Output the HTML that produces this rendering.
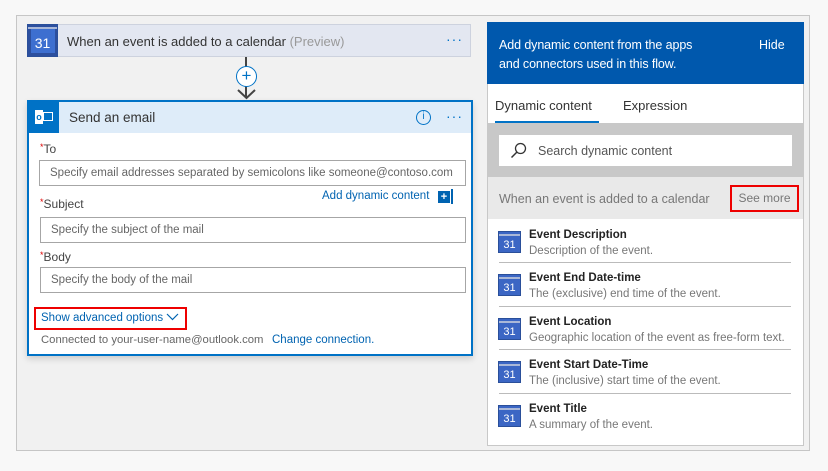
<!DOCTYPE html>
<html><head><style>
*{margin:0;padding:0;box-sizing:border-box}
body{width:828px;height:471px;background:#f8f8f8;font-family:"Liberation Sans",sans-serif;position:relative;overflow:hidden;font-size:12px;color:#333}
.a{position:absolute;white-space:nowrap}
.frame{left:16px;top:15px;width:794px;height:436px;border:1px solid #c6c6c6;background:#f1f1f1}
.cal{background:#3b66c4;border:1px solid #2a4f9a}
.cal:before{content:"";position:absolute;left:0;right:0;top:2px;height:2px;background:#aab8d8}
.cal span{position:absolute;left:0;right:0;bottom:0;text-align:center;color:#fff;font-size:12px}
.inp{border:1px solid #a6a6a6;background:#fff;height:26px;color:#666;font-size:11.5px;padding-left:10px;line-height:24px;overflow:hidden}
.lbl{font-size:12px;color:#444}
.lbl b{color:#d00;font-weight:normal;font-size:9px;vertical-align:top}
.item{left:498px;width:294px;height:43px}
.item .t{position:absolute;left:31px;top:10px;font-weight:bold;font-size:11.5px;color:#222}
.item .d{position:absolute;left:31px;top:26px;font-size:11.5px;color:#777}
.item .cal{position:absolute;left:0;top:12px;width:23px;height:22px}
.item .cal span{font-size:11px;bottom:1px}
</style></head><body>
<div class="a frame"></div>
<div class="a" style="left:27px;top:24px;width:444px;height:33px;background:#e3e7f1;border:1px solid #cdd2de"></div>
<div class="a cal" style="left:27px;top:24px;width:31px;height:33px;background:#2c4f9e"><div class="a" style="left:3px;top:4px;width:24px;height:24px;background:#3d6fd0"></div><span style="bottom:5px;font-size:14px">31</span></div>
<div class="a" style="left:67px;top:34px;font-size:13px;color:#333">When an event is added to a calendar <span style="color:#999">(Preview)</span></div>
<div class="a" style="left:446px;top:31px;color:#0072c6;font-size:14px;letter-spacing:1px">···</div>
<div class="a" style="left:245px;top:57px;width:2px;height:40px;background:#444"></div>
<div class="a" style="left:236px;top:66px;width:21px;height:21px;border-radius:50%;background:#fff;border:1px solid #0072c6;color:#0072c6;text-align:center;line-height:18px;font-size:17px">+</div>
<svg class="a" style="left:236px;top:88px" width="21" height="12"><path d="M2 2 L10.5 10 L19 2" stroke="#444" stroke-width="2" fill="none"/></svg>
<div class="a" style="left:27px;top:100px;width:446px;height:256px;background:#fff;border:2px solid #0072c6;box-shadow:0 3px 6px rgba(0,0,0,.15)"></div>
<div class="a" style="left:29px;top:102px;width:442px;height:31px;background:#deecf9"></div>
<div class="a" style="left:29px;top:102px;width:30px;height:31px;background:#0072c6"><div class="a" style="left:6px;top:8px;width:8px;height:14px;background:#fff;color:#0072c6;font-size:9px;font-weight:bold;text-align:center;line-height:14px">o</div><div class="a" style="left:14px;top:10px;width:10px;height:9px;border:1px solid #fff"></div></div>
<div class="a" style="left:69px;top:110px;font-size:13.5px;color:#333">Send an email</div>
<div class="a" style="left:416px;top:110px;width:15px;height:15px;border:1.5px solid #0072c6;border-radius:50%;color:#0072c6;font-size:10px;text-align:center;line-height:12px">i</div>
<div class="a" style="left:446px;top:108px;color:#0072c6;font-size:14px;letter-spacing:1px">···</div>
<div class="a lbl" style="left:40px;top:142px"><b>*</b>To</div>
<div class="a inp" style="left:39px;top:160px;width:427px">Specify email addresses separated by semicolons like someone@contoso.com</div>
<div class="a" style="left:322px;top:190px;color:#0063b1;font-size:11.5px">Add dynamic content</div>
<div class="a" style="left:438px;top:191px;width:12px;height:12px;background:#0063b1;color:#fff;font-size:11px;line-height:12px;text-align:center;font-weight:bold">+</div>
<div class="a" style="left:451px;top:189px;width:2px;height:15px;background:#0063b1"></div>
<div class="a lbl" style="left:40px;top:197px"><b>*</b>Subject</div>
<div class="a inp" style="left:40px;top:217px;width:426px">Specify the subject of the mail</div>
<div class="a lbl" style="left:40px;top:250px"><b>*</b>Body</div>
<div class="a inp" style="left:40px;top:267px;width:426px">Specify the body of the mail</div>
<div class="a" style="left:34px;top:307px;width:153px;height:23px;border:2px solid #e00"></div>
<div class="a" style="left:41px;top:312px;color:#0063b1;font-size:11.5px">Show advanced options</div>
<svg class="a" style="left:166px;top:313px" width="13" height="8"><path d="M1 1 L6.5 6.5 L12 1" stroke="#0063b1" stroke-width="1.2" fill="none"/></svg>
<div class="a" style="left:41px;top:334px;color:#666;font-size:11.3px">Connected to your-user-name@outlook.com</div>
<div class="a" style="left:272px;top:334px;color:#0063b1;font-size:11.5px">Change connection.</div>
<div class="a" style="left:487px;top:22px;width:317px;height:424px;background:#fff;border:1px solid #c8c8c8"></div>
<div class="a" style="left:487px;top:22px;width:317px;height:62px;background:#0058ad"></div>
<div class="a" style="left:499px;top:36px;color:#fff;font-size:12.5px;line-height:19px;letter-spacing:-0.1px">Add dynamic content from the apps<br>and connectors used in this flow.</div>
<div class="a" style="left:759px;top:38px;color:#fff;font-size:12.5px">Hide</div>
<div class="a" style="left:495px;top:98px;font-size:13px;color:#333">Dynamic content</div>
<div class="a" style="left:623px;top:98px;font-size:13px;color:#333">Expression</div>
<div class="a" style="left:495px;top:121px;width:104px;height:2px;background:#0072c6"></div>
<div class="a" style="left:488px;top:123px;width:315px;height:54px;background:#c8c8c8"></div>
<div class="a" style="left:499px;top:135px;width:293px;height:31px;background:#fff"></div>
<svg class="a" style="left:510px;top:142px" width="18" height="18"><circle cx="10.5" cy="6.5" r="5" stroke="#333" stroke-width="1.3" fill="none"/><path d="M7 10 L1.5 15.5" stroke="#333" stroke-width="1.5"/></svg>
<div class="a" style="left:538px;top:144px;font-size:12.5px;color:#555">Search dynamic content</div>
<div class="a" style="left:488px;top:177px;width:315px;height:42px;background:#e9e9e9"></div>
<div class="a" style="left:499px;top:192px;font-size:12.5px;color:#777">When an event is added to a calendar</div>
<div class="a" style="left:730px;top:185px;width:69px;height:27px;border:2px solid #e00;color:#777;font-size:12px;text-align:center;line-height:23px">See more</div>
<div class="a item" style="top:219px"><div class="cal"><span>31</span></div><div class="t">Event Description</div><div class="d">Description of the event.</div></div>
<div class="a" style="left:499px;top:262px;width:292px;height:1px;background:#bbb"></div>
<div class="a item" style="top:262px"><div class="cal"><span>31</span></div><div class="t">Event End Date-time</div><div class="d">The (exclusive) end time of the event.</div></div>
<div class="a" style="left:499px;top:306px;width:292px;height:1px;background:#bbb"></div>
<div class="a item" style="top:306px"><div class="cal"><span>31</span></div><div class="t">Event Location</div><div class="d">Geographic location of the event as free-form text.</div></div>
<div class="a" style="left:499px;top:349px;width:292px;height:1px;background:#bbb"></div>
<div class="a item" style="top:349px"><div class="cal"><span>31</span></div><div class="t">Event Start Date-Time</div><div class="d">The (inclusive) start time of the event.</div></div>
<div class="a" style="left:499px;top:393px;width:292px;height:1px;background:#bbb"></div>
<div class="a item" style="top:393px"><div class="cal"><span>31</span></div><div class="t">Event Title</div><div class="d">A summary of the event.</div></div>
</body></html>
